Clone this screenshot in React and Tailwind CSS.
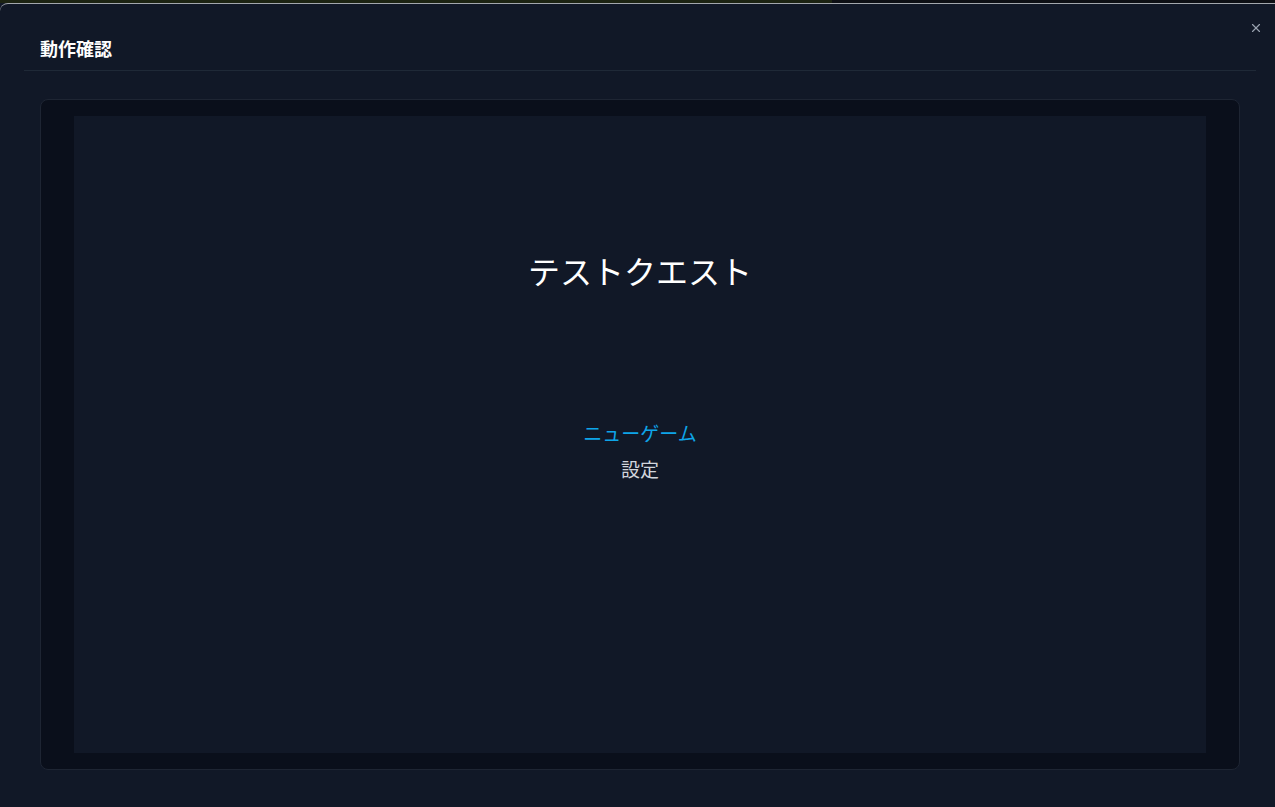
import React from "react";
import { X } from "lucide-react";

export default function App() {
  return (
    <div
      className="relative h-[807px] w-[1275px] overflow-hidden bg-[#111827]"
      style={{ fontFamily: '"Noto Sans CJK JP", "Noto Sans", sans-serif' }}
    >
      {/* backdrop strip above the dialog */}
      <div className="flex h-[3px]">
        <div className="w-[832px] bg-[#1c2312]" />
        <div className="flex-1 bg-[#0d0f14]" />
      </div>

      <div className="w-[1280px] rounded-tl-lg border-t border-[#a3a7ad] bg-[#111827]">
        <div className="relative mx-6 border-b border-[#1f2937] px-4 pb-2 pt-[30px]">
          <h2 className="text-[18px] font-bold leading-7 text-white">動作確認</h2>
          <button className="absolute right-[-7px] top-[17px] text-gray-400">
            <X size={14} strokeWidth={2} />
          </button>
        </div>

        <div className="mx-10 mt-[28px] rounded-lg border border-[#1e2533] bg-[#0a0f1b] p-4">
          <div className="mx-auto flex aspect-video h-[637px] flex-col items-center bg-[#111827] pt-[130px]">
            <h1 className="text-[32px] leading-[48px] text-white">テストクエスト</h1>
            <div className="mt-[125px] flex flex-col items-center gap-2 text-[19px] leading-7">
              <span className="text-[#0ea5e9]">ニューゲーム</span>
              <span className="text-gray-300">設定</span>
            </div>
          </div>
        </div>
      </div>
    </div>
  );
}
